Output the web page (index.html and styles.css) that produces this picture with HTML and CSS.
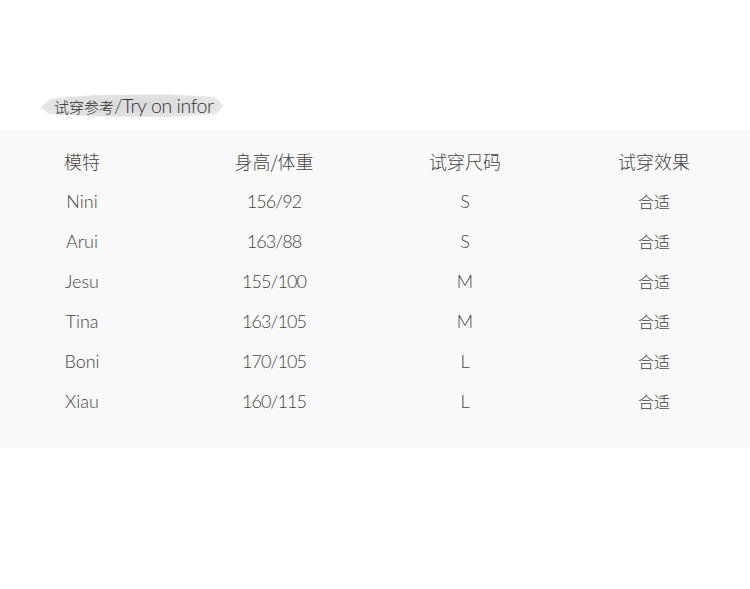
FILE: index.html
```html
<!DOCTYPE html>
<html>
<head>
<meta charset="utf-8">
<link rel="stylesheet" href="styles.css">
</head>
<body>
<div class="page">
  <div class="title-wrap">
    <div class="title"><span class="cn">试穿参考</span><span class="en">/Try on infor</span></div>
  </div>
  <div class="band">
    <div class="table">
      <div class="row head"><span>模特</span><span>身高/体重</span><span>试穿尺码</span><span>试穿效果</span></div>
      <div class="row"><span>Nini</span><span class="num">156/92</span><span>S</span><span class="cn">合适</span></div>
      <div class="row"><span>Arui</span><span class="num">163/88</span><span>S</span><span class="cn">合适</span></div>
      <div class="row"><span>Jesu</span><span class="num">155/100</span><span>M</span><span class="cn">合适</span></div>
      <div class="row"><span>Tina</span><span class="num">163/105</span><span>M</span><span class="cn">合适</span></div>
      <div class="row"><span>Boni</span><span class="num">170/105</span><span>L</span><span class="cn">合适</span></div>
      <div class="row"><span>Xiau</span><span class="num">160/115</span><span>L</span><span class="cn">合适</span></div>
    </div>
  </div>
</div>
</body>
</html>
```
FILE: styles.css
```css
html, body { margin: 0; padding: 0; background: #fff; }
.page { width: 750px; height: 589px; overflow: hidden; }
.title-wrap { padding: 93px 0 0 40px; height: 130px; box-sizing: border-box; }
.title {
  display: inline-flex; align-items: baseline;
  padding: 0 10px 0 14px; height: 25px; line-height: 25px;
  background: radial-gradient(ellipse at 50% 50%, #dadada 0%, #e2e2e2 60%, #ececec 85%, #f5f5f5 100%);
  clip-path: polygon(0 58%, 6% 22%, 30% 8%, 70% 5%, 95% 15%, 100% 50%, 96% 85%, 70% 96%, 30% 94%, 5% 85%);
  color: #333;
}
.title .cn { font-family: "Noto Sans CJK SC", sans-serif; font-size: 15px; font-weight: 300; color: #2e2e2e; }
.title .en { font-family: "Lato", sans-serif; font-size: 19.5px; font-weight: 300; letter-spacing: -0.4px; }
.band { background: #f9f9f9; padding: 11px 0 27px; }
.row {
  display: grid; grid-template-columns: 164px 220px 162px 1fr;
  height: 40px; align-items: center;
  font-family: "Lato", "Noto Sans CJK SC", sans-serif; font-weight: 300;
  font-size: 18px; color: #444;
}
.row span { text-align: center; }
.row span:last-child { padding-left: 12px; }
.row .num { letter-spacing: -0.9px; }
.row .cn { font-family: "Noto Sans CJK SC", sans-serif; font-size: 16px; }
.row.head span { font-family: "Noto Sans CJK SC", sans-serif; font-size: 18px; color: #444; }
```
